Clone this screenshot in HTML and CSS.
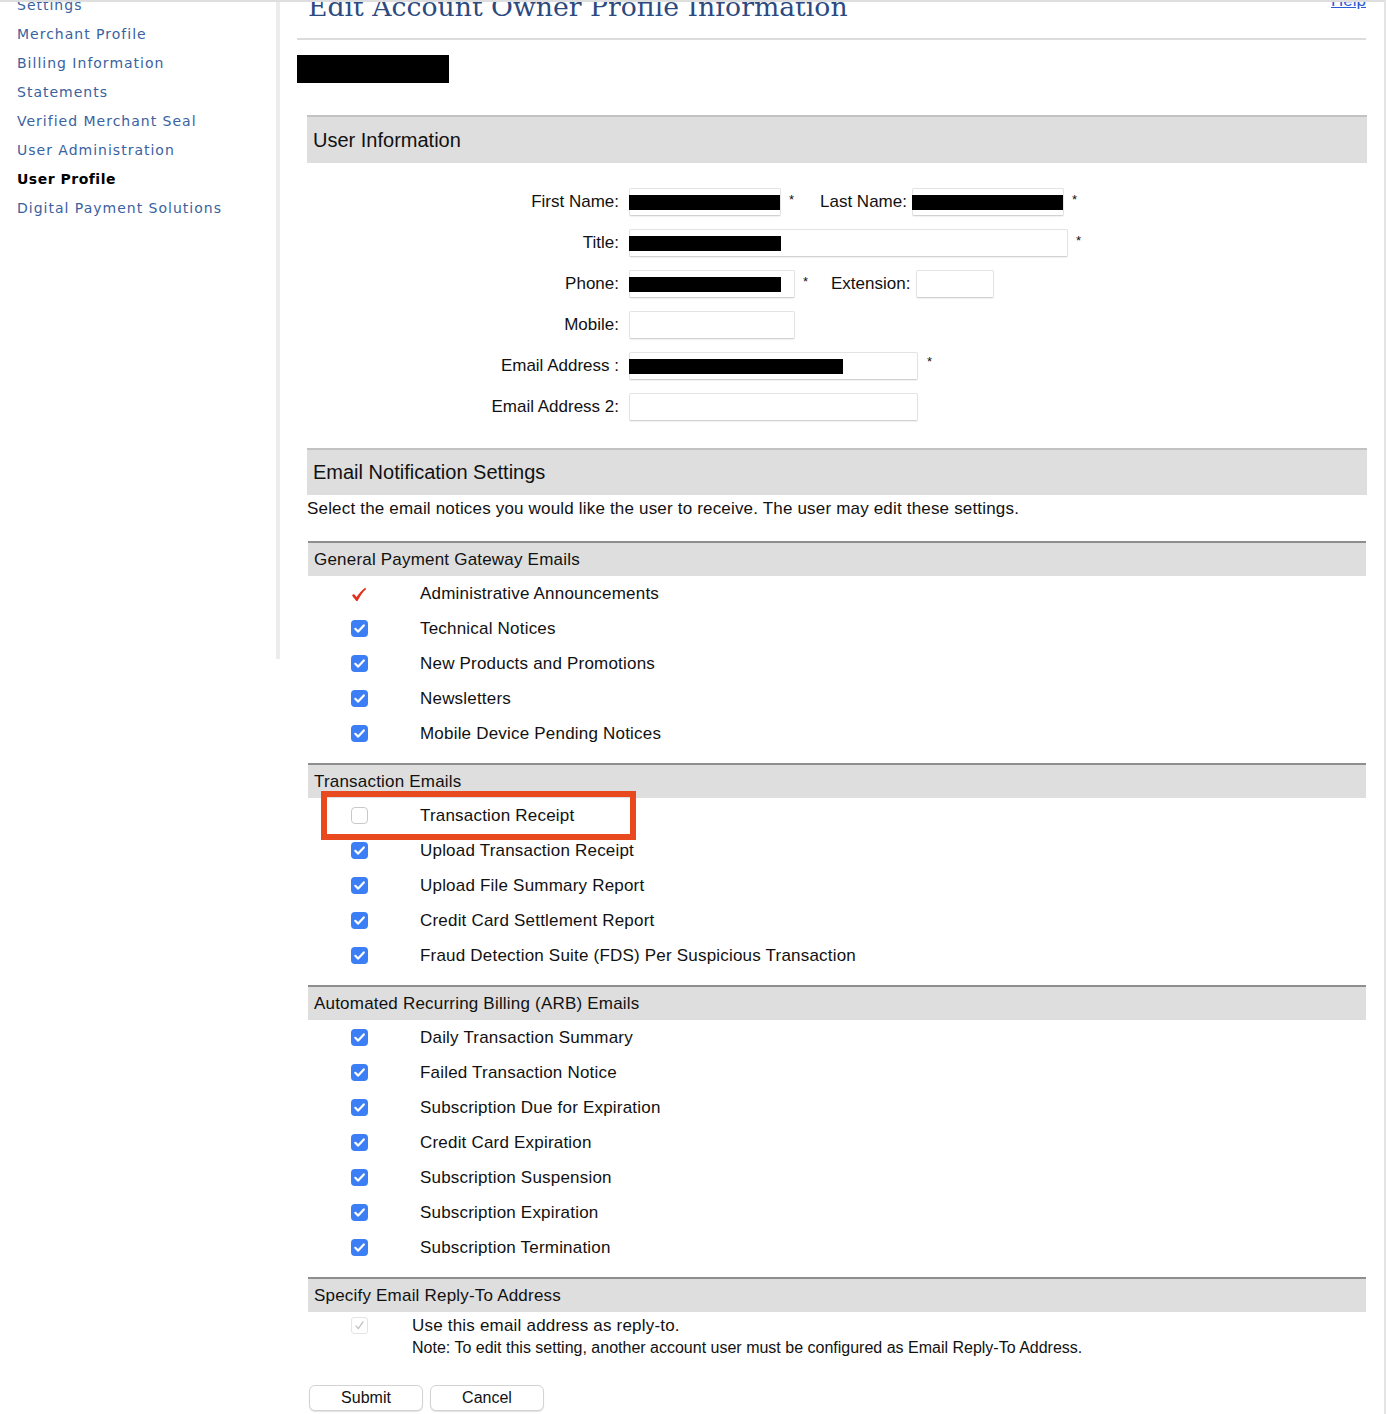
FILE: index.html
```html
<!DOCTYPE html>
<html lang="en">
<head>
<meta charset="utf-8">
<title>Edit Account Owner Profile Information</title>
<link rel="stylesheet" href="styles.css">
</head>
<body>
<div class="frame">
  <div class="page">
    <aside class="sidebar">
      <nav class="nav">
        <a class="nav-link" href="#">Settings</a>
        <a class="nav-link" href="#">Merchant Profile</a>
        <a class="nav-link" href="#">Billing Information</a>
        <a class="nav-link" href="#">Statements</a>
        <a class="nav-link" href="#">Verified Merchant Seal</a>
        <a class="nav-link" href="#">User Administration</a>
        <span class="nav-link active">User Profile</span>
        <a class="nav-link" href="#">Digital Payment Solutions</a>
      </nav>
    </aside>

    <main class="main">
      <div class="title-row">
        <h1 class="title">Edit Account Owner Profile Information</h1>
        <a class="help" href="#">Help</a>
      </div>
      <hr class="rule">
      <div class="redact-block"></div>

      <section class="panel">
        <h2 class="panel-head">User Information</h2>
        <div class="form">
          <div class="frow">
            <span class="flabel">First Name:</span>
            <span class="input w152"><span class="bar" style="width:152px"></span></span>
            <span class="req">*</span>
            <span class="flabel2 ln">Last Name:</span>
            <span class="input w152"><span class="bar" style="width:152px"></span></span>
            <span class="req">*</span>
          </div>
          <div class="frow">
            <span class="flabel">Title:</span>
            <span class="input w439"><span class="bar" style="width:152px"></span></span>
            <span class="req">*</span>
          </div>
          <div class="frow">
            <span class="flabel">Phone:</span>
            <span class="input w166"><span class="bar" style="width:152px"></span></span>
            <span class="req">*</span>
            <span class="flabel2 ext">Extension:</span>
            <span class="input w78"></span>
          </div>
          <div class="frow">
            <span class="flabel">Mobile:</span>
            <span class="input w166"></span>
          </div>
          <div class="frow">
            <span class="flabel">Email Address :</span>
            <span class="input w289"><span class="bar" style="width:214px"></span></span>
            <span class="req req-wide">*</span>
          </div>
          <div class="frow">
            <span class="flabel">Email Address 2:</span>
            <span class="input w289"></span>
          </div>
        </div>
      </section>

      <section class="panel panel-email">
        <h2 class="panel-head">Email Notification Settings</h2>
        <p class="desc">Select the email notices you would like the user to receive. The user may edit these settings.</p>

        <h3 class="sub-head sub-first">General Payment Gateway Emails</h3>
        <ul class="opts">
          <li class="opt"><span class="tick"><svg width="16" height="15" viewBox="0 0 16 15"><path d="M1 8.4 C1.8 7.5 2.6 7.1 3.2 7.3 L5.5 10 C8 6.6 10.8 3.4 14.2 0.8 L15.2 1.9 C12 4.8 9.2 8.8 6.8 13.4 C6.4 14.1 5.3 14.1 4.9 13.4 Z" fill="#e2301c"/></svg></span><span class="opt-label">Administrative Announcements</span></li>
          <li class="opt"><span class="cb on"><svg width="17" height="17" viewBox="0 0 17 17"><path d="M4.3 8.8 L7.2 11.6 L12.8 5.4" fill="none" stroke="#fff" stroke-width="2.2" stroke-linecap="round" stroke-linejoin="round"/></svg></span><span class="opt-label">Technical Notices</span></li>
          <li class="opt"><span class="cb on"><svg width="17" height="17" viewBox="0 0 17 17"><path d="M4.3 8.8 L7.2 11.6 L12.8 5.4" fill="none" stroke="#fff" stroke-width="2.2" stroke-linecap="round" stroke-linejoin="round"/></svg></span><span class="opt-label">New Products and Promotions</span></li>
          <li class="opt"><span class="cb on"><svg width="17" height="17" viewBox="0 0 17 17"><path d="M4.3 8.8 L7.2 11.6 L12.8 5.4" fill="none" stroke="#fff" stroke-width="2.2" stroke-linecap="round" stroke-linejoin="round"/></svg></span><span class="opt-label">Newsletters</span></li>
          <li class="opt"><span class="cb on"><svg width="17" height="17" viewBox="0 0 17 17"><path d="M4.3 8.8 L7.2 11.6 L12.8 5.4" fill="none" stroke="#fff" stroke-width="2.2" stroke-linecap="round" stroke-linejoin="round"/></svg></span><span class="opt-label">Mobile Device Pending Notices</span></li>
        </ul>

        <h3 class="sub-head">Transaction Emails</h3>
        <ul class="opts">
          <li class="opt opt-marked"><span class="cb off"></span><span class="opt-label">Transaction Receipt</span><span class="highlight"></span></li>
          <li class="opt"><span class="cb on"><svg width="17" height="17" viewBox="0 0 17 17"><path d="M4.3 8.8 L7.2 11.6 L12.8 5.4" fill="none" stroke="#fff" stroke-width="2.2" stroke-linecap="round" stroke-linejoin="round"/></svg></span><span class="opt-label">Upload Transaction Receipt</span></li>
          <li class="opt"><span class="cb on"><svg width="17" height="17" viewBox="0 0 17 17"><path d="M4.3 8.8 L7.2 11.6 L12.8 5.4" fill="none" stroke="#fff" stroke-width="2.2" stroke-linecap="round" stroke-linejoin="round"/></svg></span><span class="opt-label">Upload File Summary Report</span></li>
          <li class="opt"><span class="cb on"><svg width="17" height="17" viewBox="0 0 17 17"><path d="M4.3 8.8 L7.2 11.6 L12.8 5.4" fill="none" stroke="#fff" stroke-width="2.2" stroke-linecap="round" stroke-linejoin="round"/></svg></span><span class="opt-label">Credit Card Settlement Report</span></li>
          <li class="opt"><span class="cb on"><svg width="17" height="17" viewBox="0 0 17 17"><path d="M4.3 8.8 L7.2 11.6 L12.8 5.4" fill="none" stroke="#fff" stroke-width="2.2" stroke-linecap="round" stroke-linejoin="round"/></svg></span><span class="opt-label">Fraud Detection Suite (FDS) Per Suspicious Transaction</span></li>
        </ul>

        <h3 class="sub-head">Automated Recurring Billing (ARB) Emails</h3>
        <ul class="opts">
          <li class="opt"><span class="cb on"><svg width="17" height="17" viewBox="0 0 17 17"><path d="M4.3 8.8 L7.2 11.6 L12.8 5.4" fill="none" stroke="#fff" stroke-width="2.2" stroke-linecap="round" stroke-linejoin="round"/></svg></span><span class="opt-label">Daily Transaction Summary</span></li>
          <li class="opt"><span class="cb on"><svg width="17" height="17" viewBox="0 0 17 17"><path d="M4.3 8.8 L7.2 11.6 L12.8 5.4" fill="none" stroke="#fff" stroke-width="2.2" stroke-linecap="round" stroke-linejoin="round"/></svg></span><span class="opt-label">Failed Transaction Notice</span></li>
          <li class="opt"><span class="cb on"><svg width="17" height="17" viewBox="0 0 17 17"><path d="M4.3 8.8 L7.2 11.6 L12.8 5.4" fill="none" stroke="#fff" stroke-width="2.2" stroke-linecap="round" stroke-linejoin="round"/></svg></span><span class="opt-label">Subscription Due for Expiration</span></li>
          <li class="opt"><span class="cb on"><svg width="17" height="17" viewBox="0 0 17 17"><path d="M4.3 8.8 L7.2 11.6 L12.8 5.4" fill="none" stroke="#fff" stroke-width="2.2" stroke-linecap="round" stroke-linejoin="round"/></svg></span><span class="opt-label">Credit Card Expiration</span></li>
          <li class="opt"><span class="cb on"><svg width="17" height="17" viewBox="0 0 17 17"><path d="M4.3 8.8 L7.2 11.6 L12.8 5.4" fill="none" stroke="#fff" stroke-width="2.2" stroke-linecap="round" stroke-linejoin="round"/></svg></span><span class="opt-label">Subscription Suspension</span></li>
          <li class="opt"><span class="cb on"><svg width="17" height="17" viewBox="0 0 17 17"><path d="M4.3 8.8 L7.2 11.6 L12.8 5.4" fill="none" stroke="#fff" stroke-width="2.2" stroke-linecap="round" stroke-linejoin="round"/></svg></span><span class="opt-label">Subscription Expiration</span></li>
          <li class="opt"><span class="cb on"><svg width="17" height="17" viewBox="0 0 17 17"><path d="M4.3 8.8 L7.2 11.6 L12.8 5.4" fill="none" stroke="#fff" stroke-width="2.2" stroke-linecap="round" stroke-linejoin="round"/></svg></span><span class="opt-label">Subscription Termination</span></li>
        </ul>

        <h3 class="sub-head">Specify Email Reply-To Address</h3>
        <div class="reply">
          <span class="cb disabled"><svg width="15" height="15" viewBox="0 0 15 15"><path d="M4 7.8 L6.3 10.6 L11 3.8" fill="none" stroke="#bdbdbd" stroke-width="1.2" stroke-linecap="round" stroke-linejoin="round"/></svg></span>
          <div class="reply-text">
            <div class="reply-label">Use this email address as reply-to.</div>
            <div class="reply-note">Note: To edit this setting, another account user must be configured as Email Reply-To Address.</div>
          </div>
        </div>
      </section>

      <div class="actions">
        <button class="btn" type="button">Submit</button>
        <button class="btn" type="button">Cancel</button>
      </div>
    </main>
  </div>
</div>
</body>
</html>
```

FILE: styles.css
```css
* { box-sizing: border-box; }

html, body {
  margin: 0;
  padding: 0;
  background: #fff;
}

body {
  font-family: "Liberation Sans", Arial, sans-serif;
  color: #111;
}

.frame {
  width: 1386px;
  height: 1414px;
  border-top: 2px solid #dedede;
  border-right: 2px solid #e4e4e4;
  overflow: hidden;
}

.page {
  display: flex;
  align-items: flex-start;
  margin-top: -11px;
}

/* Sidebar */
.sidebar {
  width: 280px;
  flex: 0 0 280px;
  min-height: 668px;
  border-right: 4px solid #ececec;
}

.nav {
  display: flex;
  flex-direction: column;
  padding-left: 17px;
}

.nav-link {
  font-family: "DejaVu Sans", Verdana, sans-serif;
  font-size: 14px;
  letter-spacing: 1px;
  line-height: 29px;
  color: #3a62a0;
  text-decoration: none;
  white-space: nowrap;
}

.nav-link.active {
  color: #000;
  font-weight: bold;
  letter-spacing: 0.5px;
}

/* Main */
.main {
  flex: 1;
  padding: 0 17px 0 17px;
}

.title-row {
  display: flex;
  justify-content: space-between;
  align-items: flex-start;
}

.title {
  margin: 0 0 0 11px;
  font-family: "DejaVu Serif", Georgia, serif;
  font-weight: normal;
  font-size: 26.7px;
  line-height: 32px;
  color: #2c4a80;
  white-space: nowrap;
}

.help {
  font-size: 17px;
  color: #2a5bd6;
  text-decoration: underline;
  margin-right: 1px;
}

.rule {
  border: 0;
  height: 2px;
  background: #dcdcdc;
  margin: 15px 1px 0 0;
}

.redact-block {
  width: 152px;
  height: 28px;
  background: #000;
  margin-top: 15px;
}

/* Panels */
.panel {
  margin-left: 10px;
  margin-top: 32px;
}

.panel-email {
  margin-top: 21px;
}

.panel-head {
  margin: 0;
  height: 48px;
  border-top: 2px solid #c2c2c2;
  background: #dedede;
  padding-left: 6px;
  font-size: 20px;
  font-weight: normal;
  line-height: 46px;
  color: #111;
}

.panel-email .panel-head {
  height: 47px;
  line-height: 45px;
}

/* Form */
.form {
  padding-top: 18px;
}

.frow {
  display: flex;
  align-items: center;
  height: 41px;
}

.flabel {
  width: 312px;
  text-align: right;
  font-size: 17px;
  margin-right: 10px;
  white-space: nowrap;
}

.flabel2 {
  font-size: 17px;
  white-space: nowrap;
}

.flabel2.ln {
  margin-left: 26px;
  margin-right: 5px;
}

.flabel2.ext {
  margin-left: 23px;
  margin-right: 6px;
}

.input {
  display: flex;
  align-items: center;
  height: 28px;
  border: 1px solid #e3e3e3;
  border-bottom-color: #d2d2d2;
  border-radius: 2px;
  background: #fff;
  box-shadow: 0 1px 1px rgba(0, 0, 0, 0.06);
}

.w152 { width: 152px; }
.w166 { width: 166px; }
.w78 { width: 78px; }
.w289 { width: 289px; }
.w439 { width: 439px; }

.bar {
  display: block;
  height: 15px;
  background: #000;
  margin-left: -1px;
  margin-top: 2px;
}

.req {
  font-size: 13px;
  margin-left: 8px;
  margin-top: -4px;
  width: 5px;
}

.req-wide { margin-left: 9px; margin-top: -8px; }

.desc {
  margin: 4px 0 0 0;
  font-size: 17px;
  letter-spacing: 0.18px;
  line-height: 20px;
}

.sub-head {
  margin: 0 1px;
  height: 35px;
  border-top: 2px solid #8e8e8e;
  background: #dedede;
  padding-left: 6px;
  font-size: 17px;
  letter-spacing: 0.2px;
  font-weight: normal;
  line-height: 33px;
  color: #111;
}

.sub-first {
  margin-top: 22px;
}

.opts {
  list-style: none;
  margin: 0 0 12px 0;
  padding: 0 0 0 44px;
}

.opt {
  position: relative;
  display: flex;
  align-items: center;
  height: 35px;
}

.opt-label {
  font-size: 17px;
  letter-spacing: 0.2px;
  margin-left: 52px;
}

.cb {
  display: flex;
  align-items: center;
  justify-content: center;
  width: 17px;
  height: 17px;
  flex: 0 0 17px;
  border-radius: 4px;
}

.cb.on {
  background: #3b7ef5;
}

.cb.off {
  background: #fff;
  border: 1px solid #c9c9c9;
}

.cb.disabled {
  background: #fff;
  border: 1px solid #e4e4e4;
  border-radius: 3px;
}

.tick {
  display: flex;
  width: 17px;
  flex: 0 0 17px;
  margin-top: 1px;
}

.highlight {
  position: absolute;
  left: -30px;
  top: -7px;
  width: 315px;
  height: 49px;
  border: 6px solid #e8491e;
  pointer-events: none;
}

/* Reply-to */
.reply {
  display: flex;
  align-items: flex-start;
  padding: 4px 0 0 44px;
}

.reply .cb {
  margin-top: 1px;
}

.reply-text {
  margin-left: 44px;
}

.reply-label {
  font-size: 17px;
  letter-spacing: 0.2px;
  line-height: 20px;
}

.reply-note {
  font-size: 16px;
  line-height: 20px;
  margin-top: 2px;
}

/* Actions */
.actions {
  display: flex;
  gap: 7px;
  margin: 27px 0 0 12px;
}

.btn {
  width: 114px;
  height: 26px;
  background: #fff;
  border: 1px solid #d3d3d3;
  border-radius: 6px;
  box-shadow: 0 1px 1px rgba(0, 0, 0, 0.12);
  font-family: "Liberation Sans", Arial, sans-serif;
  font-size: 16px;
  color: #111;
  padding: 0;
}
```
